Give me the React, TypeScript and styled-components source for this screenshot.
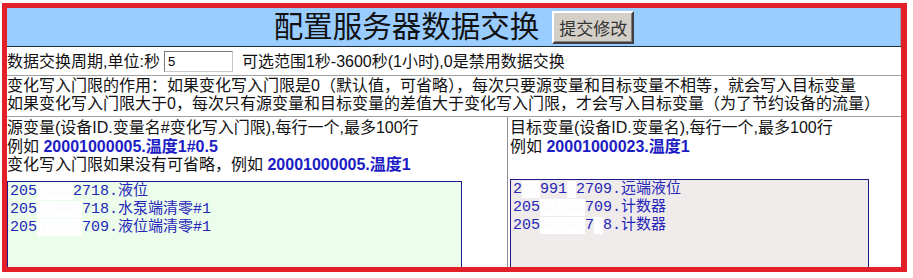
import styled, { createGlobalStyle } from "styled-components";

const GlobalStyle = createGlobalStyle`
  body {
    margin: 0;
    background: #fff;
    font-family: "Liberation Sans", "Noto Sans CJK SC", sans-serif;
    font-size: 16px;
    color: #111;
  }
`;

type Piece = { text: string; hidden?: boolean };

const sourceLines: Piece[][] = [
  [{ text: "205" }, { text: "7000", hidden: true }, { text: "2718.液位" }],
  [{ text: "205" }, { text: "51000", hidden: true }, { text: "718.水泵端清零#1" }],
  [{ text: "205" }, { text: "91002", hidden: true }, { text: "709.液位端清零#1" }],
];

const targetLines: Piece[][] = [
  [{ text: "2" }, { text: "05", hidden: true }, { text: "991" }, { text: "0", hidden: true }, { text: "2709.远端液位" }],
  [{ text: "205" }, { text: "99102", hidden: true }, { text: "709.计数器" }],
  [{ text: "205" }, { text: "99102", hidden: true }, { text: "7" }, { text: "1", hidden: true }, { text: "8.计数器" }],
];

const renderLines = (lines: Piece[][]) =>
  lines.map((line, i) => (
    <EditorLine key={i}>
      {line.map((p, j) => (p.hidden ? <Mask key={j}>{p.text}</Mask> : <span key={j}>{p.text}</span>))}
    </EditorLine>
  ));

const App = () => {
  return (
    <>
      <GlobalStyle />
      <Frame>
        <Header>
          <Title>配置服务器数据交换</Title>
          <SubmitButton type="button">提交修改</SubmitButton>
        </Header>

        <PeriodRow>
          数据交换周期,单位:秒
          <PeriodInput defaultValue="5" />
          可选范围1秒-3600秒(1小时),0是禁用数据交换
        </PeriodRow>

        <NoteRow>
          <Line>变化写入门限的作用：如果变化写入门限是0（默认值，可省略），每次只要源变量和目标变量不相等，就会写入目标变量</Line>
          <Line>如果变化写入门限大于0，每次只有源变量和目标变量的差值大于变化写入门限，才会写入目标变量（为了节约设备的流量）</Line>
        </NoteRow>

        <Columns>
          <Cell>
            <Line>源变量(设备ID.变量名#变化写入门限),每行一个,最多100行</Line>
            <Line>
              例如 <Example>20001000005.温度1#0.5</Example>
            </Line>
            <Line>
              变化写入门限如果没有可省略，例如 <Example>20001000005.温度1</Example>
            </Line>
            <Editor $bg="#ecfdec" $width={455} $top={6}>
              {renderLines(sourceLines)}
            </Editor>
          </Cell>
          <Cell $divider>
            <Line>目标变量(设备ID.变量名),每行一个,最多100行</Line>
            <Line>
              例如 <Example>20001000023.温度1</Example>
            </Line>
            <Editor $bg="#efebea" $width={359} $top={23}>
              {renderLines(targetLines)}
            </Editor>
          </Cell>
        </Columns>
      </Frame>
    </>
  );
};

export default App;

const Frame = styled.div`
  box-sizing: border-box;
  margin: 3px 0 0 2px;
  width: 905px;
  height: 269px;
  border: 5px solid #e3202a;
  border-right-width: 6px;
  overflow: hidden;
`;

const Header = styled.div`
  height: 38px;
  background: #99ccff;
  border-bottom: 1px solid #1c2b3b;
  box-shadow: inset -1px 0 0 #8fa6bd;
  display: flex;
  align-items: center;
  justify-content: center;
  gap: 13px;
`;

const Title = styled.h1`
  margin: 0;
  font-size: 29.5px;
  font-weight: normal;
  color: #111;
  line-height: 36px;
`;

const SubmitButton = styled.button`
  box-sizing: border-box;
  width: 82px;
  height: 33px;
  padding: 0;
  background: #d4d0c8;
  border: 2px solid;
  border-color: #fff #404040 #404040 #fff;
  box-shadow: inset -1px -1px 0 #808080;
  font-family: "Liberation Sans", "Noto Sans CJK SC", sans-serif;
  font-size: 17px;
  color: #333;
`;

const PeriodRow = styled.div`
  height: 29px;
  border-bottom: 1px solid #a0a0a0;
  display: flex;
  align-items: center;
  white-space: nowrap;
  line-height: 18px;
  padding-top: 1px;
  box-sizing: border-box;
`;

const PeriodInput = styled.input`
  box-sizing: border-box;
  width: 69px;
  height: 21px;
  margin: 0 9px 0 4px;
  padding: 0 3px;
  border: 1px solid;
  border-color: #7a7a7a #c8c8c8 #c8c8c8 #7a7a7a;
  font-family: "Liberation Sans", sans-serif;
  font-size: 13px;
`;

const NoteRow = styled.div`
  height: 41px;
  box-sizing: border-box;
  padding-top: 1px;
  border-bottom: 1px solid #a0a0a0;
`;

const Line = styled.div`
  line-height: 18px;
  white-space: nowrap;
`;

const Example = styled.b`
  color: #1c1cc4;
  font-weight: bold;
`;

const Columns = styled.div`
  display: grid;
  grid-template-columns: 500px 1fr;
`;

const Cell = styled.div<{ $divider?: boolean }>`
  padding-top: 2px;
  padding-left: ${(p) => (p.$divider ? "2px" : "0")};
  border-left: ${(p) => (p.$divider ? "1px solid #909090" : "none")};
  ${Line} {
    line-height: 18.5px;
  }
`;

const Editor = styled.div<{ $bg: string; $width: number; $top: number }>`
  box-sizing: border-box;
  width: ${(p) => p.$width}px;
  height: 110px;
  margin-top: ${(p) => p.$top}px;
  padding: 1px 2px;
  background: ${(p) => p.$bg};
  border: 1px solid #1a1a8a;
  font-family: "Liberation Mono", "Noto Sans CJK SC", monospace;
  font-size: 15px;
  color: #2626b8;
`;

const EditorLine = styled.div`
  line-height: 18px;
  white-space: pre;
`;

const Mask = styled.span`
  color: #fbfbfe;
  background: #fff;
`;
